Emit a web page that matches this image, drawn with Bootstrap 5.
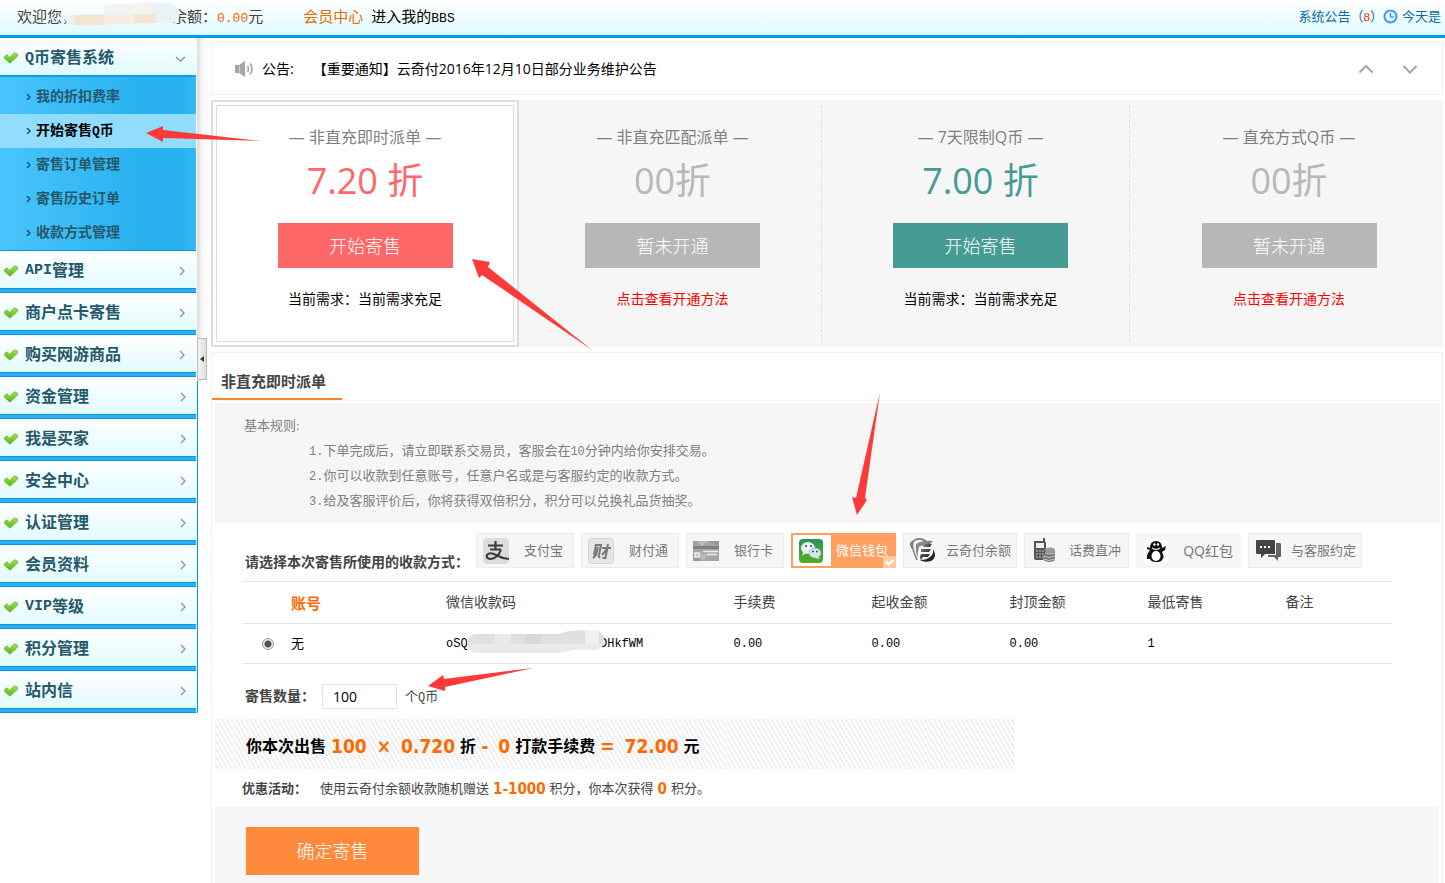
<!DOCTYPE html>
<html lang="zh-CN">
<head>
<meta charset="utf-8">
<meta name="viewport" content="width=device-width, initial-scale=1">
<title>Q币寄售系统</title>
<link href="https://cdn.jsdelivr.net/npm/bootstrap@5.3.0/dist/css/bootstrap.min.css" rel="stylesheet">
<style>
:root{--song:"Liberation Serif","Noto Sans CJK SC",sans-serif;--hei:"Open Sans","Noto Sans CJK SC",sans-serif;--num:"DejaVu Sans Condensed","DejaVu Sans",sans-serif}
body{font-family:var(--song);font-size:14px;line-height:20px;color:#000;background:#fff;overflow-x:hidden}
a{text-decoration:none}
.lat{font-family:"Liberation Mono",monospace;font-size:12px;line-height:1}
.topbar .lat,.side .lat{font-size:13px}
.topbar{height:38px;border-bottom:3px solid #009cf0;background:linear-gradient(#fff,#defaff);font-size:15px;color:#444;padding:0 4px 2px 17px}
.hot{color:#e86a00}
.smudge{position:absolute;pointer-events:none}
.topright{font-size:13px;color:#0a6aa8}
.side{flex:0 0 197px;position:relative;padding-top:1px}
.side-head{display:flex;align-items:center;width:100%;height:42px;border:0;padding:2px 10px 5px 4px;font:bold 16px/20px var(--song);color:#24586a;text-align:left;background:linear-gradient(#0098ec 0 1px,#30b0ee 1px 4px,#0098ec 4px 5px) left bottom/196px 5px no-repeat,linear-gradient(#fff,#defaff)}
.side-head .lat{font-size:15px}
.side-head.open{height:38px;padding-top:2px;padding-bottom:0;background:linear-gradient(#fff,#defaff);border-bottom:2px solid #0c9eee}
.side-head .tick{width:14px;height:12px;margin-right:7px}
.side-head .chev{width:9px;height:12px;margin-left:auto}
.side-head.open .chev{width:11px}
.sub{background:linear-gradient(90deg,#4bc4fc,#27b1ee 75%,#27b1ee 92%,#36b8f4);padding:3px 0 0;border-bottom:1px solid #0098ec;width:196px}
.sub a{display:flex;align-items:center;height:34px;padding-left:26px;gap:5px;font-weight:bold;color:#24586a}
.sub a.active{background:#92dcfd;color:#000}
.menu{width:196px}
.menu.lower{width:198px;border-right:1px solid #0098ec;margin-right:-1px}
.gutter{flex:0 0 14px;background:linear-gradient(90deg,#d8d8d8,#f8f8f8 5px,#fff);height:343px;position:relative}
.grip{position:absolute;top:300px;left:0;width:10px;height:42px;border:1px solid #bbb;background:linear-gradient(90deg,#f4f4f4,#ddd);padding:0;display:flex;align-items:center;justify-content:center}
.content{flex:1 1 0;min-width:0;padding:4px 2px 0 0}
.notice{height:53px;border:1px solid #f0f0f0;padding:0 24px 0 22px;font-family:var(--hei)}
.notice-link{margin-left:19px}
.plans{margin-top:5px;background:#f6f6f6;display:grid;grid-template-columns:repeat(4,1fr)}
.plan{padding:5px;text-align:center;font-family:var(--hei)}
.plan>div{height:237px;padding-top:20px}
.plan.split>div{border-right:1px dashed #ddd}
.plan.on{border:2px solid #ddd;padding:3px;background:#fff}
.plan.on>div{border:1px solid #ddd;padding-top:19px;height:237px}
.plan h2{font-size:16px;line-height:24px;color:#808080;margin:0;font-weight:400}
.plan .rate{font-size:36px;line-height:54px;margin-top:5px;color:#b8b8b8}
.plan .btn,.confirm{border:0;border-radius:0;width:175px;height:45px;font:300 18px/24px var(--hei);color:#fff;background:#b7b7b7;margin-top:15px}
.plan .btn{display:block;margin-left:auto;margin-right:auto}
.plan p{margin:21px 0 0}
.plan p a{color:#f00}
.red .rate{color:#ff6868}.red .btn{background:#ff6868}
.teal .rate{color:#469c94}.teal .btn{background:#469c94}
.panel{margin-top:5px;border:1px solid #f0f0f0;border-bottom:0}
.tabs{height:48px;border-bottom:1px solid #f3f3f3}
.tabs a{display:block;width:130px;height:47px;border-bottom:2px solid #f98528;padding:17px 9px 0;font:bold 15px/22px var(--hei);color:#444}
.rules{margin:2px 2px 0;background:#f6f6f6;height:120px;padding:10px 30px;font-size:13px;line-height:25px;color:#808080}
.rules ol{list-style:none;margin:0;padding-left:65px}
.pay{padding:10px 0 0 33px;height:58px}
.pay-label{font-weight:bold;color:#444;width:231px;padding-top:20px;white-space:nowrap}
.opts{gap:7px}
.opt{position:relative;display:flex;align-items:center;justify-content:space-between;height:35px;width:98px;border:1px solid #ebebeb;background:#f6f6f6;font-size:13px;color:#777;padding:0 10px 0 6px;cursor:pointer;white-space:nowrap}
.opt input{position:absolute;opacity:0}
.opt svg{width:26px;height:26px}
.opt.w105{width:105px;padding-right:7px}.opt.w114{width:114px;padding-right:5px}
.opt.plain{border-color:#f6f6f6;font-size:14px;font-family:var(--hei)}
.opt.on{border:2px solid #ffa060;background:linear-gradient(90deg,#fff 38px,#ffa060 38px);color:#fff;padding-left:5px;padding-right:6px}
.opt svg.corner{position:absolute;right:-2px;bottom:-2px;width:13px;height:12px}
.acct{margin:0 50px 0 30px}
.acct table{width:100%;table-layout:fixed;border-top:1px solid #e5e5e5}
.acct tr{border-bottom:1px solid #e5e5e5}
.acct th{height:42px;font-weight:400;color:#444;padding:0;font-size:14px}
.acct td{height:40px;padding:0;font-size:13px}
.acct td.lat{font-size:12px}
.acct th.first-th{font:bold 15px/20px var(--hei);color:#ff6a00}
.code-head{display:inline-block;width:154px}
.acct input{width:12px;height:12px;margin:0;display:block;margin-left:20px;appearance:none;border:1px solid #999;border-radius:50%;background:radial-gradient(circle,#555 0 3px,#eee 4px)}
.qty{padding:20px 0 0 33px;gap:8px;color:#444}
.qty label{font-weight:bold;width:69px;white-space:nowrap}
.qty input{width:75px;height:25px;border:1px solid #e5e5e5;padding:0 10px;font:14px/20px var(--hei);color:#000}
.unit{font-size:13px}
.sum{margin:10px 0 0 3px;max-width:800px;height:50px;padding:4px 0 0 31px;display:flex;align-items:center;gap:5px;font:bold 16px/24px var(--hei);background:repeating-linear-gradient(60deg,#fff 0 2px,#f0f0f0 2px 4px)}
.sum b,.promo b{font-family:var(--num);color:#ff6a00;font-weight:bold}
.sum b{font-size:19px;display:flex;gap:10px}
.promo{padding:10px 0 8px 30px;font-size:13px;color:#444;gap:4px}
.promo b{font-size:15px}
.promo strong{width:74px}
.foot{margin:0 3px;background:#f6f6f6;padding:20px 31px 8px}
.confirm{width:173px;height:48px;margin:0;background:#ff8a3c;display:block}
.marks{position:absolute;left:0;top:0;pointer-events:none}
</style>
</head>
<body>
<svg width="0" height="0" class="position-absolute">
<defs>
<linearGradient id="g1" x2="0" y2="1"><stop stop-color="#a9e54a"/><stop offset="1" stop-color="#54b40c"/></linearGradient>
<linearGradient id="g2" x2="0" y2="1"><stop stop-color="#2f8f5c"/><stop offset="1" stop-color="#55b01c"/></linearGradient>
<linearGradient id="g3" x2="1" y2="1"><stop stop-color="#999"/><stop offset=".5" stop-color="#444"/><stop offset="1" stop-color="#222"/></linearGradient>
<symbol id="tick" viewBox="0 0 14 12"><path d="M.5 4.7 3 2.8l2.700 2.600L10.600.8l3 1.500v1.800L6 11.200.6 6.400z" fill="url(#g1)" stroke="#5bb52a" stroke-width=".8"/></symbol>
<symbol id="right" viewBox="0 0 9 12"><path d="m3 2 4 4-4 4" fill="none" stroke="#8d979b" stroke-width="1.400"/></symbol>
<symbol id="dot" viewBox="0 0 5 6"><path d="m1 0 3 3-3 3" fill="none" stroke="#1d4f86" stroke-width="1.500"/></symbol>
</defs>
</svg>
<header class="topbar d-flex align-items-center justify-content-between position-relative">
<div class="d-flex">
<span style="width:155px">欢迎您，</span><span>余额：<span class="hot lat">0.00</span>元</span>
<a href="#" class="hot ms-4 ps-3">会员中心</a><a href="#" class="text-black ms-2">进入我的<span class="lat">BBS</span></a>
</div>
<svg class="smudge" style="left:62px;top:0" width="120" height="30"><path d="M2 16q3-2 40-2V5L100 2q17 1 18 11-1 10-8 10L14 25q-12-1-12-9z" fill="#eaf3f4"/><path d="M12 15h30v10H13zM72 14h22v9H72z" fill="#f4e5d3"/><path d="M42 15h30v8l-30 2z" fill="#f7eee2"/><path d="M44 5l46-2v11H44z" fill="#f3f4f2"/></svg>
<div class="topright d-flex align-items-center"><a href="#" style="color:inherit">系统公告（<span style="color:#f20">8</span>）</a>
<svg width="15" height="15" class="me-1" viewBox="0 0 15 15"><circle cx="7.500" cy="7.500" r="6" fill="#e4f5ff" stroke="#3a9cf5" stroke-width="2"/><path d="M7.500 4v4H11" fill="none" stroke="#2a7fd8" stroke-width="1.200"/></svg><span>今天是</span></div>
</header>
<div class="d-flex align-items-start">
<nav class="side">
<div class="menu">
<button class="side-head open"><svg class="tick"><use href="#tick"/></svg><span class="lat">Q</span>币寄售系统<svg class="chev" viewBox="0 0 11 12"><path d="m1 5 4.500 4L10 5" fill="none" stroke="#8d979b" stroke-width="1.400"/></svg></button>
<div class="sub">
<a href="#"><svg width="5" height="6"><use href="#dot"/></svg>我的折扣费率</a>
<a href="#" class="active"><svg width="5" height="6"><use href="#dot"/></svg><span>开始寄售<span class="lat">Q</span>币</span></a>
<a href="#"><svg width="5" height="6"><use href="#dot"/></svg>寄售订单管理</a>
<a href="#"><svg width="5" height="6"><use href="#dot"/></svg>寄售历史订单</a>
<a href="#"><svg width="5" height="6"><use href="#dot"/></svg>收款方式管理</a>
</div>
<button class="side-head"><svg class="tick"><use href="#tick"/></svg><span class="lat">API</span>管理<svg class="chev"><use href="#right"/></svg></button>
<button class="side-head"><svg class="tick"><use href="#tick"/></svg>商户点卡寄售<svg class="chev"><use href="#right"/></svg></button>
<button class="side-head"><svg class="tick"><use href="#tick"/></svg>购买网游商品<svg class="chev"><use href="#right"/></svg></button>
</div>
<div class="menu lower">
<button class="side-head"><svg class="tick"><use href="#tick"/></svg>资金管理<svg class="chev"><use href="#right"/></svg></button>
<button class="side-head"><svg class="tick"><use href="#tick"/></svg>我是买家<svg class="chev"><use href="#right"/></svg></button>
<button class="side-head"><svg class="tick"><use href="#tick"/></svg>安全中心<svg class="chev"><use href="#right"/></svg></button>
<button class="side-head"><svg class="tick"><use href="#tick"/></svg>认证管理<svg class="chev"><use href="#right"/></svg></button>
<button class="side-head"><svg class="tick"><use href="#tick"/></svg>会员资料<svg class="chev"><use href="#right"/></svg></button>
<button class="side-head"><svg class="tick"><use href="#tick"/></svg><span class="lat">VIP</span>等级<svg class="chev"><use href="#right"/></svg></button>
<button class="side-head"><svg class="tick"><use href="#tick"/></svg>积分管理<svg class="chev"><use href="#right"/></svg></button>
<button class="side-head"><svg class="tick"><use href="#tick"/></svg>站内信<svg class="chev"><use href="#right"/></svg></button>
</div>
</nav>
<div class="gutter"><button class="grip" aria-label="收起菜单"><svg width="4" height="6"><path d="M4 0v6L0 3z" fill="#333"/></svg></button></div>
<main class="content">
<div class="notice d-flex align-items-center">
<svg width="20" height="16" viewBox="0 0 20 16"><path d="M1 4h4v8H1zM5 4l6-4v16l-6-4z" fill="#a5a5a5"/><path d="M5.500 4v8" stroke="#ccc"/><path d="M13.500 5q2 3 0 6M16 2.500q4 5.500 0 11" fill="none" stroke="#a5a5a5" stroke-width="1.700"/></svg>
<span class="ms-2">公告:</span><a href="#" class="text-black notice-link">【重要通知】云奇付2016年12月10日部分业务维护公告</a>
<svg class="ms-auto me-4" width="16" height="10"><path d="m1.500 8.500 6.500-6.500 6.500 6.500" fill="none" stroke="#a5a5a5" stroke-width="2"/></svg>
<svg class="ms-1" width="16" height="10"><path d="m1.500 2 6.500 6.500L14.500 2" fill="none" stroke="#a5a5a5" stroke-width="2"/></svg>
</div>
<section class="plans">
<div class="plan on red"><div><h2>— 非直充即时派单 —</h2><div class="rate">7.20 折</div><button class="btn">开始寄售</button><p>当前需求：当前需求充足</p></div></div>
<div class="plan split"><div><h2>— 非直充匹配派单 —</h2><div class="rate">00折</div><button class="btn">暂未开通</button><p><a href="#">点击查看开通方法</a></p></div></div>
<div class="plan split teal"><div><h2>— 7天限制Q币 —</h2><div class="rate">7.00 折</div><button class="btn">开始寄售</button><p>当前需求：当前需求充足</p></div></div>
<div class="plan"><div><h2>— 直充方式Q币 —</h2><div class="rate">00折</div><button class="btn">暂未开通</button><p><a href="#">点击查看开通方法</a></p></div></div>
</section>
<section class="panel">
<div class="tabs"><a href="#">非直充即时派单</a></div>
<div class="rules">基本规则:
<ol><li><span class="lat">1.</span>下单完成后，请立即联系交易员，客服会在<span class="lat">10</span>分钟内给你安排交易。</li><li><span class="lat">2.</span>你可以收款到任意账号，任意户名或是与客服约定的收款方式。</li><li><span class="lat">3.</span>给及客服评价后，你将获得双倍积分，积分可以兑换礼品货抽奖。</li></ol></div>
<div class="pay d-flex align-items-start">
<div class="pay-label">请选择本次寄售所使用的收款方式：</div>
<div class="opts d-flex">
<label class="opt"><input type="radio" name="pay"><svg viewBox="0 0 26 26"><rect width="26" height="26" rx="4" fill="#dcdcdc"/><path d="M5 7.500h15M12.500 3v8.500M7 11.500h11" fill="none" stroke="#3c3c3c" stroke-width="2.200"/><path d="M18 11.500q-3 9-11 9.500-4-.5-3-4 3-3.500 9 0 6 3.500 13 4" fill="none" stroke="#3c3c3c" stroke-width="2.200"/></svg>支付宝</label>
<label class="opt"><input type="radio" name="pay"><svg viewBox="0 0 26 26"><rect x=".5" y=".5" width="25" height="25" rx="3" fill="#e5e5e5" stroke="#d5d5d5"/><path d="M6 17 8 7h5l-2 10M10 9 8 17l-3 3M10 17l2 3M14 10h9M20 6l-2.500 14h-3M19 11l-5 6" fill="none" stroke="#777" stroke-width="2"/></svg>财付通</label>
<label class="opt"><input type="radio" name="pay"><svg viewBox="0 0 26 26"><path d="M0 3h26v20H0z" fill="#999"/><path d="m0 3 8 5 7-5 11 6v14H10L0 14z" fill="#a6a6a6"/><path d="m4 3 5 6 6-6M0 14l10 9 4-6" fill="#bbb"/><path d="M0 8h26v3H0z" fill="#808080"/><path d="M10 13.500h15M14 16.500h10M2 15h4v4H2z" stroke="#eee" stroke-width="1.500" fill="#bbb"/></svg>银行卡</label>
<label class="opt w105 on"><input type="radio" name="pay" checked><svg viewBox="0 0 26 26"><rect x="1" y="1" width="24" height="24" rx="4" fill="url(#g2)"/><ellipse cx="10" cy="10" rx="7" ry="6" fill="#e9f4f4"/><path d="m5 14-1 4 4-3z" fill="#e9f4f4"/><ellipse cx="17" cy="15" rx="6" ry="5" fill="#d5e8f4" stroke="#7cae96" stroke-width=".7"/><path d="m19 18 3 3-5-1z" fill="#d5e8f4"/><circle cx="8" cy="8" r="1" fill="#345"/><circle cx="13" cy="8" r="1" fill="#345"/><circle cx="15" cy="13.500" r=".9" fill="#345"/><circle cx="19" cy="13.500" r=".9" fill="#345"/></svg>微信钱包<svg class="corner" viewBox="0 0 13 12"><path d="M0 0h13v12H0z" fill="#ffc9a3"/><path d="m2.500 5.500 3 3 5-4.500" fill="none" stroke="#fff" stroke-width="2.500"/></svg></label>
<label class="opt w114"><input type="radio" name="pay"><svg viewBox="0 0 26 26"><path d="M7 22Q-1 4 5 2q6-3 12 2M3 11Q-2 5 4 3" fill="none" stroke="#777" stroke-width="1.500"/><path d="M6 6q6-4 17-3l-3 3q-7 0-9 2l-2 1q-2 6-1 11-3-6-2-14z" fill="#888"/><path d="M12 7q5-2 10-1l-2 3h-6zM11 11h10l-2 3h-8zM11 16h9l-2 3h-5l-2 3q-2-3 0-6z" fill="url(#g3)"/><path d="M23 11q5 8-2 12-7 2-11-1 7 0 10-3 4-3 3-8z" fill="#222"/></svg>云奇付余额</label>
<label class="opt w105"><input type="radio" name="pay"><svg viewBox="0 0 26 26"><path d="M12 0h2v4h-2zM3 3h10q2 0 2 2v17H5q-2 0-2-2z" fill="#555"/><path d="M5 5h8v5H5z" fill="#eee"/><path d="M5 13h8M5 16h8M5 19h8" stroke="#ccc" stroke-dasharray="2 1"/><ellipse cx="19" cy="12" rx="5" ry="2.500" fill="#999"/><path d="M14 13q5 3 10 0v9q-5 4-12 0v-6h2z" fill="#777"/><path d="M12 18q6 3 12 0M12 21q6 3 12 0M14 15q5 2 10 0" fill="none" stroke="#ccc"/></svg>话费直冲</label>
<label class="opt w105 plain"><input type="radio" name="pay"><svg viewBox="0 0 26 26"><rect x="1" y="1" width="24" height="24" rx="4" fill="#fff"/><path d="M13 3q6 0 6 7l4-2-1 4-3 2q3 5 0 8-1 2-6 2t-6-3l-3 0q-1-4 3-9l-3-1 0-2 3 1q0-7 6-7z" fill="#111"/><ellipse cx="13" cy="18" rx="4.500" ry="5" fill="#fff"/><path d="M9 10q4 3 8 0" stroke="#ddd" fill="none" stroke-width="1.500"/><circle cx="11.500" cy="6.500" r="1.200" fill="#fff"/><circle cx="15" cy="6.500" r="1.200" fill="#fff"/></svg>QQ红包</label>
<label class="opt w114"><input type="radio" name="pay"><svg viewBox="0 0 26 26"><path d="M21 5h4q1 0 1 1v12q0 1-1 1h-2v4l-4-4h-6v-2h8z" fill="#666"/><path d="M2 2h17q1 0 1 1v12q0 1-1 1h-9l-4 4v-4H2q-1 0-1-1V3q0-1 1-1z" fill="#444"/><path d="M5 8h2v2H5zM9 8h2v2H9zM13 8h2v2h-2z" fill="#fff"/></svg>与客服约定</label>
</div>
</div>
<div class="acct position-relative">
<table>
<colgroup><col style="width:49px"><col style="width:155px"><col style="width:25%"><col style="width:12%"><col style="width:12%"><col style="width:12%"><col style="width:12%"><col></colgroup>
<thead><tr><th></th><th class="first-th">账号</th><th>微信收款码</th><th>手续费</th><th>起收金额</th><th>封顶金额</th><th>最低寄售</th><th>备注</th></tr></thead>
<tbody><tr><td><input type="radio" name="acct" checked id="acct0"></td><td><label for="acct0">无</label></td><td class="lat"><span class="code-head">oSQ</span>DHkfWM</td><td class="lat">0.00</td><td class="lat">0.00</td><td class="lat">0.00</td><td class="lat">1</td><td></td></tr></tbody>
</table>
<svg class="smudge" style="left:225px;top:49px" width="140" height="26"><path d="M8 4h85q5-4 32-4 12 1 12 10 0 8-10 10H105L90 23H8q-7-2-8-10Q1 5 8 4z" fill="#e0e0e0"/><path d="M28 4h16v10H28zM6 14h131q-2 5-10 6h-22l-15 3H8q-5-2-6-9z" fill="#eaeaea"/><path d="M58 4h16v10H58z" fill="#d8d8d8"/><path d="M118 0h14v14h-14z" fill="#f1f1f1"/></svg>
</div>
<div class="qty d-flex align-items-center"><label for="qty">寄售数量：</label><input id="qty" type="text" value="100"><span class="unit">个<span class="lat">Q</span>币</span></div>
<div class="sum">你本次出售<b><span>100</span><span>×</span><span>0.720</span></b>折<b><span>-</span><span>0</span></b>打款手续费<b><span>=</span><span>72.00</span></b>元</div>
<div class="promo d-flex align-items-center"><strong>优惠活动：</strong><span>使用云奇付余额收款随机赠送</span><b>1-1000</b><span>积分，你本次获得</span><b>0</b><span>积分。</span></div>
<div class="foot"><button class="confirm">确定寄售</button></div>
</section>
</main>
</div>
<svg class="marks" width="900" height="700" fill="#fd3a3a"><path d="m146 133 17-7v4l98 11-98-3v4z"/><path d="m472 259 18 3-2 5 104 83-110-75-3 3z"/><path d="m857 515-5-18 4 1 24-106-15 106 2 2z"/><path d="m428 686 15-11 1 4 89-11-88 19v4z"/></svg>
<script src="https://cdn.jsdelivr.net/npm/bootstrap@5.3.0/dist/js/bootstrap.bundle.min.js"></script>
</body>
</html>
